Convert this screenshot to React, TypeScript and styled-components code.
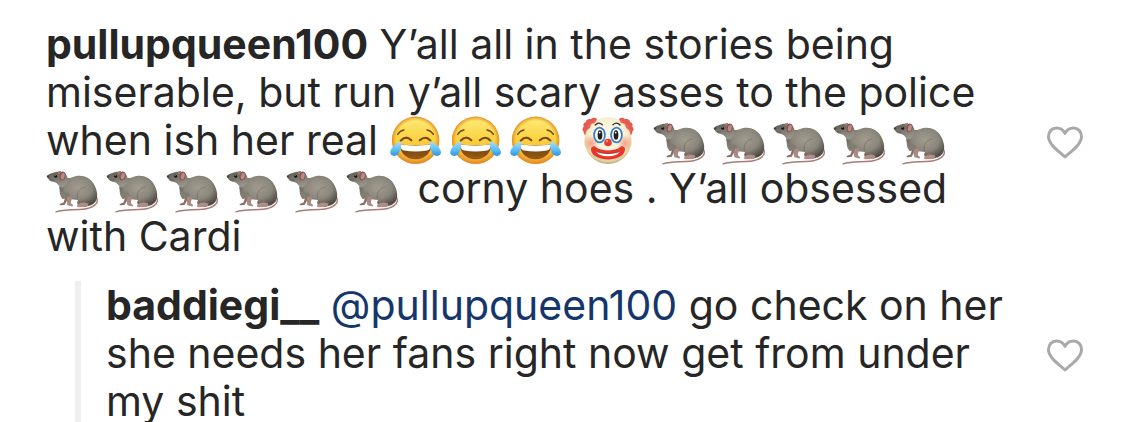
import React from "react";
import styled, { createGlobalStyle } from "styled-components";

const GlobalStyle = createGlobalStyle`
  html { scrollbar-width: none; }
  body {
    margin: 0;
    background: #ffffff;
    color: #262626;
    font-family: Inter, "Liberation Sans", sans-serif;
  }
`;

const Thread = styled.main`
  display: flex;
  flex-direction: column;
  gap: 21px;
  padding: 20px 40px 0 46px;
`;

const Comment = styled.article<{ $reply?: boolean }>`
  display: flex;
  align-items: center;
  justify-content: space-between;
  margin-left: ${(p) => (p.$reply ? "29px" : "0")};
  padding-left: ${(p) => (p.$reply ? "25px" : "0")};
  border-left: ${(p) => (p.$reply ? "6px solid #efefef" : "none")};
`;

const Message = styled.p`
  margin: 0;
  font-size: 41px;
  line-height: 48px;
  white-space: nowrap;
`;

const Author = styled.a`
  color: inherit;
  font-weight: 700;
  text-decoration: none;
`;

const Mention = styled.a`
  color: #14366b;
  text-decoration: none;
`;

const LikeButton = styled.button`
  display: flex;
  flex: none;
  margin: 4px 0 0;
  padding: 0;
  border: 0;
  background: none;
  cursor: pointer;
`;

const Emoji = styled.svg`
  width: 52px;
  height: 48px;
  margin-right: 8px;
  vertical-align: top;
  overflow: visible;
`;

const Definitions = styled.svg`
  position: absolute;
  width: 0;
  height: 0;
`;

const EmojiPaints = () => (
  <Definitions aria-hidden="true">
    <defs>
      <linearGradient id="joyFace" x1="0" y1="0" x2="0" y2="1">
        <stop offset="0" stopColor="#fdec78" />
        <stop offset="0.5" stopColor="#fbd13f" />
        <stop offset="1" stopColor="#f0a035" />
      </linearGradient>
      <radialGradient id="joyEdge">
        <stop offset="0.82" stopColor="#e68a1c" stopOpacity="0" />
        <stop offset="1" stopColor="#dc7d1c" stopOpacity="0.8" />
      </radialGradient>
      <linearGradient id="joyMouth" x1="0" y1="0" x2="0" y2="1">
        <stop offset="0" stopColor="#6b3b0c" />
        <stop offset="1" stopColor="#9a5c16" />
      </linearGradient>
      <linearGradient id="tear" x1="0" y1="0" x2="0" y2="1">
        <stop offset="0" stopColor="#a5def8" />
        <stop offset="0.6" stopColor="#5abdf2" />
        <stop offset="1" stopColor="#2b94de" />
      </linearGradient>
      <radialGradient id="clownFace" cx="0.5" cy="0.4" r="0.6">
        <stop offset="0" stopColor="#fffced" />
        <stop offset="0.65" stopColor="#f8eed1" />
        <stop offset="0.9" stopColor="#e2d3a4" />
        <stop offset="1" stopColor="#b9a779" />
      </radialGradient>
      <radialGradient id="blush">
        <stop offset="0" stopColor="#f98c72" stopOpacity="0.8" />
        <stop offset="1" stopColor="#f98c72" stopOpacity="0" />
      </radialGradient>
      <radialGradient id="ratBody" cx="0.5" cy="0.4" r="0.6">
        <stop offset="0" stopColor="#a29c90" />
        <stop offset="0.6" stopColor="#8b867b" />
        <stop offset="1" stopColor="#504d46" />
      </radialGradient>
      <linearGradient id="ratHead" x1="0" y1="0" x2="0.5" y2="1">
        <stop offset="0" stopColor="#5c5953" />
        <stop offset="1" stopColor="#98948a" />
      </linearGradient>
    </defs>
  </Definitions>
);

const Joy = () => (
  <Emoji viewBox="0 0 52 48" role="img" aria-label="face with tears of joy">
    <circle cx="26.6" cy="24.3" r="23.7" fill="url(#joyFace)" />
    <circle cx="26.6" cy="24.3" r="23.7" fill="url(#joyEdge)" />
    <g fill="none" stroke="#7b470f" strokeLinecap="round">
      <path d="M8.7 18.4q2.3-3.8 6.3-4.5M38 13.9q4 .7 6.4 4.5" strokeWidth="1.5" />
      <path d="M11.8 24.6q4.8-5.6 10.5-.3M30.800 24.3q5.8-5.2 10.6.3" strokeWidth="2.2" />
    </g>
    <path d="M11.3 28.3q15.3 2.500 30.6 0c1 7-5 15-15.3 15s-16.300-8-15.300-15z" fill="url(#joyMouth)" />
    <path d="M11.8 28.500q14.800 2.300 29.600 0c1.100 2.400-.7 5.500-3.400 6q-11.400 1.900-22.800 0c-2.900-.5-4.500-3.600-3.400-6z" fill="#fff" />
    <path d="M12.2 25.6c-5 .8-10.1 6-10.9 10.2-.7 3.7 4.5 5.7 7.7 2.5 2.7-2.7 3.2-7.8 3.2-12.7z" fill="url(#tear)" />
    <path d="M41 25.6c5 .8 10.1 6 10.9 10.2.7 3.7-4.5 5.7-7.7 2.5-2.7-2.7-3.2-7.8-3.2-12.7z" fill="url(#tear)" />
  </Emoji>
);

const Clown = () => (
  <Emoji viewBox="0 0 52 48" role="img" aria-label="clown face">
    <path
      d="M16 3c-2-2-5-1.5-6 .3-2.700-1-5 .7-5 2.700-2.500.7-3.300 3-2.200 4.700-2 1.500-1.500 4 0 5-.7 2 .7 3.600 2.800 3.300zM38 3c2-2 5-1.500 6 .3 2.700-1 5 .7 5 2.700 2.500.7 3.300 3 2.200 4.700 2 1.500 1.500 4 0 5 .7 2-.7 3.600-2.800 3.300z"
      fill="#e65a50"
    />
    <circle cx="27" cy="24.5" r="23.5" fill="url(#clownFace)" />
    <path d="M6 14l3-2 1-4 4-1 2-4q-8 3-12 12zM48 14l-3-2-1-4-4-1-2-4q8 3 12 12z" fill="#e9675b" />
    <circle cx="10" cy="27" r="8" fill="url(#blush)" />
    <circle cx="44" cy="27" r="8" fill="url(#blush)" />
    <path d="M14.3 9q3.3-3.6 7-.3M32 8.7q3.7-3.3 7 .3" fill="none" stroke="#332e2b" strokeWidth="1.3" strokeLinecap="round" />
    <g fill="#fff" stroke="#347fca" strokeWidth="1.8">
      <ellipse cx="18.5" cy="19" rx="5.4" ry="7.3" />
      <ellipse cx="35.5" cy="19" rx="5.4" ry="7.3" />
    </g>
    <ellipse cx="19" cy="19" rx="2.4" ry="4.7" fill="#22201f" />
    <ellipse cx="35" cy="19" rx="2.4" ry="4.7" fill="#22201f" />
    <circle cx="18.7" cy="16.6" r=".9" fill="#fff" />
    <circle cx="34.7" cy="16.6" r=".9" fill="#fff" />
    <path
      d="M11 31c1.5-1.4 3.600-.6 5 1 6 3.200 16 3.200 22 0 1.400-1.600 3.500-2.400 5-1 2.200 2 .5 6-2.200 8.500-7.400 5.300-20.200 5.300-27.600 0-2.700-2.500-4.400-6.500-2.200-8.500z"
      fill="#e9362c"
    />
    <path d="M15 35.500q12 4.300 24 0-3 4.700-12 4.700t-12-4.700z" fill="#fff" />
    <path d="M15.500 35.700q11.500 3.800 23 0" fill="none" stroke="#9a2620" strokeWidth=".8" />
    <circle cx="27" cy="26.5" r="3.8" fill="#e53b30" />
    <circle cx="26" cy="25" r="1.2" fill="#f98d7d" />
  </Emoji>
);

const Rat = () => (
  <Emoji viewBox="0 0 52 48" role="img" aria-label="rat">
    <path
      d="M50.500 33c3.500 7-4.500 11.300-13.500 12.200-9 1-18.500.2-27 2.600"
      fill="none"
      stroke="#a67d77"
      strokeWidth="1.4"
      strokeLinecap="round"
    />
    <path d="M19 34l-1.500 4.500-4 1.500.5 1.200 4.500-.3 4-7z" fill="#8d6f68" />
    <path
      d="M15 12c4 1.400 6.500 2.800 10 1.700C34 9.500 43 12 47.500 19.500c3.700 6 5.200 13.500 1.800 18.500-2.700 4-10 5.200-15.800 3.500-3-1-2.500-3.700-1.500-5.500l-7-.8-4.500-1.500c-4.500-1-7-5.200-7.200-10.200z"
      fill="url(#ratBody)"
    />
    <path
      d="M1.500 13.500c-.8-2 1.300-3.500 3.500-4.100 3.200-1.500 6-1.900 9-1.700 5 .7 8.300 4 7.500 8.300-.7 5-4 8-7.500 7.300-1.700-2.500-3-4.500-6-5.200-3-.5-5.500-1.800-6.500-4.600z"
      fill="url(#ratHead)"
    />
    <path d="M23 29c1.500 3 .5 6-1 8.500l-2-3-3.500.5c-1.500-2-3-5-2.800-8z" fill="#817c71" />
    <path d="M21.500 32.500l4.500.5c0 2.500-1.500 4.500-1 6.500l2.300 1.700-.7 1.300-5.100-1.200c-1.200-2.500-.5-6 0-8.800z" fill="#a88a82" />
    <path d="M33 39.500c3-1.500 7.500-1.200 9.500.5l-1.500 3-9.300.3c-1.400-1-.5-2.800 1.300-3.800z" fill="#b38c86" />
    <path d="M31.500 35c-1.500-6.500 2.500-11.500 8-12" fill="none" stroke="#65615a" strokeWidth=".9" opacity=".6" />
    <path d="M11.500 9.500c.3-2 2-2.800 3.500-2.200v3z" fill="#a67872" />
    <ellipse cx="16.6" cy="12" rx="3" ry="4.4" transform="rotate(12 16.6 12)" fill="#795550" />
    <ellipse cx="16.8" cy="12.2" rx="2" ry="3.4" transform="rotate(12 16.8 12.2)" fill="#c28680" />
    <circle cx="9.7" cy="12.2" r="1.5" fill="#171514" />
    <circle cx="9.3" cy="11.7" r=".4" fill="#fff" />
    <circle cx="2" cy="12.5" r="1.2" fill="#4b403d" />
    <path d="M3.5 15.5q3 1 4.5.5" fill="none" stroke="#59514b" strokeWidth=".6" />
  </Emoji>
);

const Rats = ({ count }: { count: number }) => (
  <>
    {Array.from({ length: count }, (_, i) => (
      <Rat key={i} />
    ))}
  </>
);

const Like = () => (
  <LikeButton type="button" aria-label="Like">
    <svg width="40" height="36" viewBox="0 0 40 36" aria-hidden="true">
      <path
        d="M20 33C14 27.5 3.5 20.5 3.5 12.5 3.5 7.5 7 4 11.5 4c3.800 0 6.800 2 8.500 5.300C21.700 6 24.700 4 28.500 4c4.500 0 8 3.500 8 8.500C36.500 20.500 26 27.500 20 33z"
        fill="none"
        stroke="#a9a9a9"
        strokeWidth="3"
        strokeLinejoin="round"
      />
    </svg>
  </LikeButton>
);

export default function App() {
  return (
    <>
      <GlobalStyle />
      <EmojiPaints />
      <Thread>
        <Comment>
          <Message>
            <Author href="#pullupqueen100">pullupqueen100</Author> Y’all all in the stories being
            <br />
            miserable, but run y’all scary asses to the police
            <br />
            when ish her real <Joy /><Joy /><Joy /> <Clown /> <Rats count={5} />
            <br />
            <Rats count={6} /> corny hoes . Y’all obsessed
            <br />
            with Cardi
          </Message>
          <Like />
        </Comment>
        <Comment $reply>
          <Message>
            <Author href="#baddiegi__">baddiegi__</Author>{" "}
            <Mention href="#pullupqueen100">@pullupqueen100</Mention> go check on her
            <br />
            she needs her fans right now get from under
            <br />
            my shit
          </Message>
          <Like />
        </Comment>
      </Thread>
    </>
  );
}
